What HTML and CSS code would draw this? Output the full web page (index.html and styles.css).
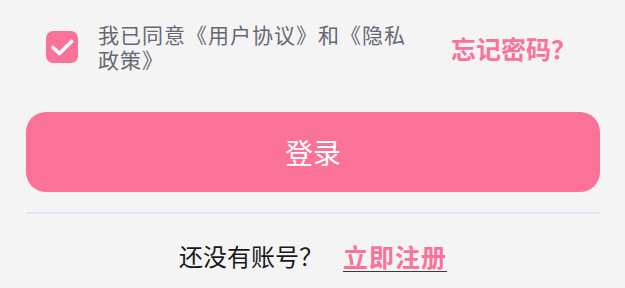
FILE: index.html
```html
<!DOCTYPE html>
<html lang="zh">
<head>
<meta charset="utf-8">
<link rel="stylesheet" href="styles.css">
</head>
<body>
<div class="page">
  <div class="agree-row">
    <span class="checkbox">
      <svg width="32" height="32" viewBox="0 0 32 32"><polyline points="7,16.5 13.5,22.5 25.5,10.5" fill="none" stroke="#fff" stroke-width="3.6" stroke-linecap="round" stroke-linejoin="round"/></svg>
    </span>
    <p class="agree-text">我已同意《用户协议》和《隐私政策》</p>
    <a class="forgot">忘记密码？</a>
  </div>
  <button class="login-btn">登录</button>
  <div class="divider"></div>
  <div class="register-row">
    <span class="no-account">还没有账号？</span>
    <a class="register">立即注册</a>
  </div>
</div>
</body>
</html>
```
FILE: styles.css
```css
html, body {
  margin: 0;
  padding: 0;
  background: #f4f4f4;
}
body {
  font-family: "Noto Sans CJK SC", "Noto Sans", sans-serif;
}
.page {
  padding: 22px 25px 0 26px;
}
.agree-row {
  display: flex;
  align-items: center;
  height: 50px;
}
.checkbox {
  display: flex;
  width: 32px;
  height: 32px;
  margin-left: 20px;
  border-radius: 7px;
  background: #fb7299;
  flex-shrink: 0;
}
.agree-text {
  margin: 0 0 0 20px;
  width: 320px;
  font-size: 21px;
  letter-spacing: 1px;
  line-height: 25px;
  color: #666973;
}
.forgot {
  margin-left: auto;
  margin-right: 24px;
  font-size: 25px;
  font-weight: 700;
  color: #fb7299;
  line-height: 30px;
  margin-top: 2px;
}
.login-btn {
  display: flex;
  align-items: center;
  justify-content: center;
  width: 100%;
  height: 80px;
  margin-top: 40px;
  border: none;
  border-radius: 20px;
  background: #fb7299;
  color: #fff;
  font-family: inherit;
  font-size: 28px;
  padding: 0;
}
.divider {
  height: 2px;
  margin-top: 20px;
  background: #e3e7fb;
}
.register-row {
  display: flex;
  justify-content: center;
  align-items: center;
  gap: 20px;
  margin-top: 26px;
  font-size: 24px;
  line-height: 32px;
}
.no-account {
  color: #18191c;
}
.register {
  color: #fb7299;
  font-weight: 700;
  font-size: 25px;
  letter-spacing: 1px;
  text-decoration: underline;
  text-decoration-color: #3a3a3a;
  text-decoration-thickness: 2px;
  text-underline-offset: 4px;
}
```
